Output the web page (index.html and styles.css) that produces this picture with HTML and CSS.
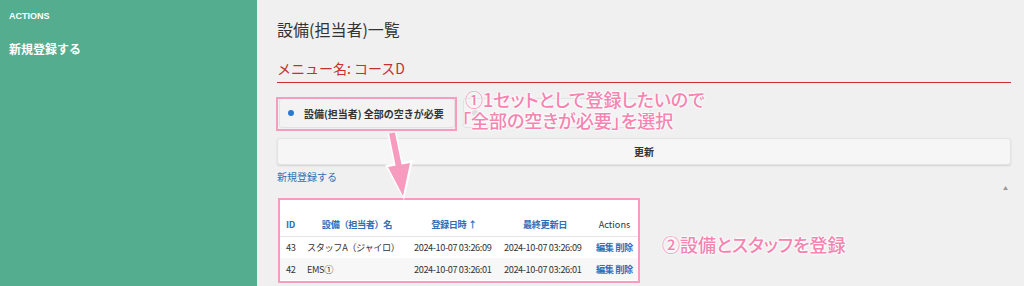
FILE: index.html
```html
<!DOCTYPE html>
<html lang="ja">
  <head>
    <meta charset="UTF-8" />
    <meta name="viewport" content="width=device-width, initial-scale=1.0" />
    <title>設備(担当者)一覧</title>
    <link rel="stylesheet" href="styles.css">
  </head>
  <body>
    <aside class="sidebar">
      <div class="side-head">ACTIONS</div>
      <a class="side-link" href="#">新規登録する</a>
    </aside>

    <main class="main">
      <h1 class="title">設備(担当者)一覧</h1>
      <h2 class="menu-name">メニュー名: コースD</h2>

      <div class="options">
        <label class="option">
          <span class="dot"></span>
          設備(担当者) 全部の空きが必要
        </label>
        <label class="option option-other">
          <span class="dot dot-off"></span>
        </label>
      </div>

      <button class="update">更新</button>

      <a class="new-link" href="#">新規登録する</a>
      <div class="caret">▲</div>

      <div class="table-wrap">
        <table class="list">
          <thead>
            <tr>
              <th class="c-id">ID</th>
              <th class="c-name">設備（担当者）名</th>
              <th class="c-date">登録日時 ↑</th>
              <th class="c-date2">最終更新日</th>
              <th class="c-act plain">Actions</th>
            </tr>
          </thead>
          <tbody>
            <tr>
              <td>43</td>
              <td>スタッフA（ジャイロ）</td>
              <td>2024-10-07 03:26:09</td>
              <td>2024-10-07 03:26:09</td>
              <td class="acts"><a href="#">編集</a> <a href="#">削除</a></td>
            </tr>
            <tr class="odd">
              <td>42</td>
              <td>EMS①</td>
              <td>2024-10-07 03:26:01</td>
              <td>2024-10-07 03:26:01</td>
              <td class="acts"><a href="#">編集</a> <a href="#">削除</a></td>
            </tr>
          </tbody>
        </table>
      </div>

      <!-- 注釈 -->
      <div class="mark-option"></div>
      <div class="note note-1">
        <div>①1セットとして登録したいので</div>
        <div class="pull">「全部の空きが必要」を選択</div>
      </div>
      <svg class="arrow" width="40" height="80" viewBox="0 0 40 80">
        <line x1="8" y1="3" x2="16" y2="42" stroke="#fff" stroke-width="9" />
        <polygon points="1,35 29,30 20,70" fill="#fff" />
        <line x1="8" y1="3" x2="16" y2="42" stroke="#f79cbe" stroke-width="6" />
        <polygon points="4,37 26,33 19,66" fill="#f79cbe" />
      </svg>
      <div class="note note-2">②設備とスタッフを登録</div>
    </main>
  </body>
</html>
```

FILE: styles.css
```css
* {
  box-sizing: border-box;
}
body {
  margin: 0;
  display: flex;
  height: 286px;
  overflow: hidden;
  background-color: #f0f0f0;
  font-family: "Noto Sans CJK JP", "Noto Sans", sans-serif;
  color: #333;
}
a {
  text-decoration: none;
}
.sidebar {
  width: 257px;
  flex-shrink: 0;
  background-color: #53ad8e;
  padding: 10px 9px;
  display: flex;
  flex-direction: column;
}
.side-head {
  color: #fff;
  font-family: "Liberation Sans", Arial, sans-serif;
  font-size: 9px;
  font-weight: bold;
  line-height: 12px;
}
.side-link {
  margin-top: 19px;
  color: #fff;
  font-size: 12px;
  font-weight: bold;
  line-height: 16px;
}
.main {
  position: relative;
  flex: 1;
  padding: 17px 13px 0 20px;
}
.title {
  margin: 0;
  font-size: 16px;
  font-weight: normal;
  line-height: 24px;
  color: #333;
}
.menu-name {
  margin: 17px 0 0;
  padding-bottom: 4px;
  font-size: 14px;
  font-weight: normal;
  line-height: 20px;
  color: #c62f2f;
  border-bottom: 1.5px solid #c62f2f;
}
.options {
  display: flex;
  gap: 8px;
  margin-top: 15px;
  margin-left: 2px;
}
.option {
  display: flex;
  align-items: center;
  gap: 10px;
  width: 176px;
  height: 30px;
  padding: 0 8px;
  background-color: #f3f3f3;
  border: 1px solid #e2e2e2;
  border-radius: 3px;
  font-size: 10px;
  font-weight: bold;
  color: #333;
  white-space: nowrap;
}
.option-other {
  width: 188px;
}
.dot {
  width: 6px;
  height: 6px;
  border-radius: 50%;
  background-color: #2a7ad0;
}
.dot-off {
  background-color: #ddd;
}
.update {
  display: block;
  width: 100%;
  height: 27px;
  margin-top: 10px;
  background-color: #f6f6f6;
  border: 1px solid #e3e3e3;
  border-radius: 3px;
  box-shadow: 0 1px 2px rgba(0, 0, 0, 0.12);
  font-family: inherit;
  font-size: 10px;
  font-weight: bold;
  color: #333;
}
.new-link {
  display: block;
  margin-top: 5px;
  font-size: 10px;
  line-height: 14px;
  color: #2f6fb8;
}
.caret {
  text-align: right;
  font-size: 5px;
  line-height: 8px;
  color: #999;
  margin-right: 3px;
}
.table-wrap {
  width: 362px;
  margin-top: 6px;
  margin-left: 1px;
  border: 2px solid #f79cbe;
  background-color: #fff;
  padding-bottom: 1px;
}
.list {
  width: 100%;
  table-layout: fixed;
  border-collapse: collapse;
  font-size: 9.2px;
  letter-spacing: -0.4px;
  color: #333;
}
.list th {
  height: 36px;
  padding-bottom: 5px;
  vertical-align: bottom;
  font-weight: bold;
  color: #2f6fb8;
  text-align: center;
  border-bottom: 1px solid #e6e6e6;
}
.list th.plain {
  font-weight: normal;
  color: #333;
  letter-spacing: 0;
}
.list th.c-id {
  width: 25px;
  text-align: left;
  padding-left: 6px;
}
.list th.c-name {
  width: 104px;
}
.list th.c-date {
  width: 90px;
}
.list th.c-date2 {
  width: 92px;
}
.list td {
  height: 22px;
  padding: 0 4px 0 5px;
  white-space: nowrap;
  overflow: hidden;
}
.list td:first-child {
  padding-left: 6px;
}
.list td:nth-child(2) {
  padding-left: 2px;
}
.list tr.odd td {
  background-color: #f7f7f7;
}
.acts a {
  color: #2f6fb8;
  font-weight: bold;
}
.mark-option {
  position: absolute;
  left: 19px;
  top: 97px;
  width: 181px;
  height: 34px;
  border: 2px solid #f79cbe;
}
.note {
  position: absolute;
  color: #f584b0;
  font-size: 18px;
  font-weight: 500;
  line-height: 21px;
  white-space: nowrap;
  font-feature-settings: "palt";
  text-shadow: 0 0 2px #fff, 0 0 2px #fff, 0 0 3px #fff, 0 0 3px #fff;
}
.pull {
  margin-left: -3px;
}
.note-1 {
  left: 208px;
  top: 89px;
}
.note-2 {
  left: 405px;
  top: 234px;
  font-size: 18px;
}
.arrow {
  position: absolute;
  left: 127px;
  top: 130px;
}
```
